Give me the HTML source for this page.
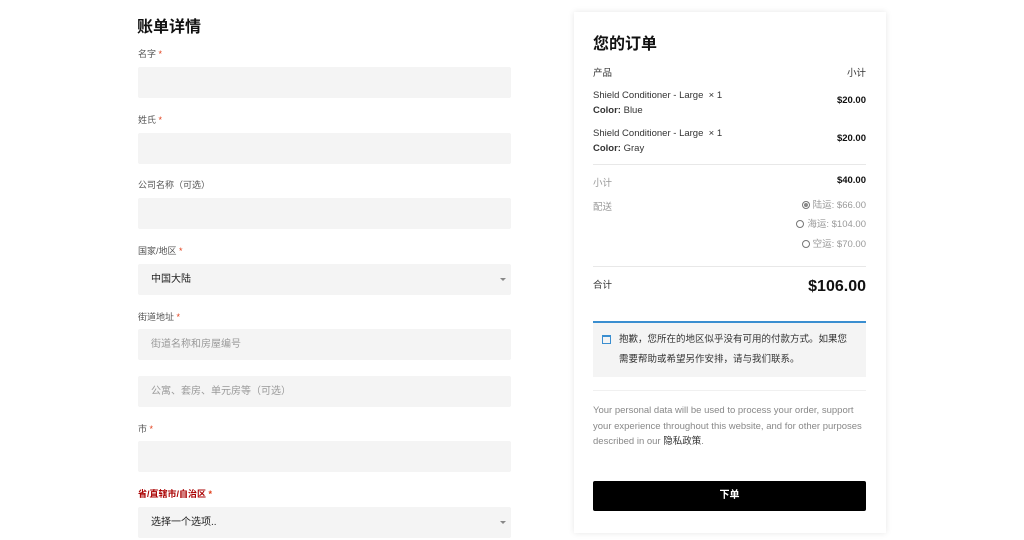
<!DOCTYPE html>
<html><head><meta charset="utf-8"><style>
*{margin:0;padding:0;box-sizing:border-box}
body{width:1024px;height:540px;overflow:hidden;background:#fff;font-family:"Liberation Sans","Noto Sans CJK SC",sans-serif;color:#222;position:relative}
.a{position:absolute}
h2{position:absolute;font-size:16px;font-weight:bold;color:#111}
.lb{position:absolute;left:138px;font-size:9px;color:#555}
.lb i{color:#e2401c;font-style:normal}
.in{position:absolute;left:138px;width:373px;height:31px;background:#f4f4f4;border-radius:2px;font-size:10px;padding-left:13px;line-height:31px;color:#999}
.sel{color:#222}
.sel:after{content:"";position:absolute;right:5px;top:14px;border:3px solid transparent;border-top:3px solid #888}
.card{position:absolute;left:574px;top:12px;width:312px;height:521px;background:#fff;box-shadow:0 0 6px rgba(0,0,0,.1)}
.t{position:absolute;font-size:9.5px;color:#333}
.hr{position:absolute;left:19px;width:273px;height:1px;background:#e8e8e8}
.rd{display:inline-block;width:8px;height:8px;border:1px solid #777;border-radius:50%;vertical-align:-1px;margin-right:3px;position:relative}
.rd.on:after{content:"";position:absolute;left:1px;top:1px;width:4px;height:4px;border-radius:50%;background:#888}
</style></head><body>
<h2 style="left:137px;top:13px">账单详情</h2>
<div class="lb" style="top:47px">名字 <i>*</i></div>
<div class="in" style="top:67px"></div>
<div class="lb" style="top:113px">姓氏 <i>*</i></div>
<div class="in" style="top:133px"></div>
<div class="lb" style="top:178px">公司名称（可选）</div>
<div class="in" style="top:198px"></div>
<div class="lb" style="top:244px">国家/地区 <i>*</i></div>
<div class="in sel" style="top:264px">中国大陆</div>
<div class="lb" style="top:310px">街道地址 <i>*</i></div>
<div class="in" style="top:329px">街道名称和房屋编号</div>
<div class="in" style="top:376px">公寓、套房、单元房等（可选）</div>
<div class="lb" style="top:422px">市 <i>*</i></div>
<div class="in" style="top:441px"></div>
<div class="lb" style="top:487px;color:#a00;font-weight:bold">省/直辖市/自治区 <i>*</i></div>
<div class="in sel" style="top:507px">选择一个选项..</div>

<div class="card">
<h2 style="left:19px;top:18px">您的订单</h2>
<div class="t" style="left:19px;top:53px">产品</div>
<div class="t" style="right:20px;top:53px">小计</div>
<div class="t" style="left:19px;top:76px;line-height:15px">Shield Conditioner - Large &nbsp;× 1<br><b>Color:</b> Blue</div>
<div class="t" style="right:20px;top:83px;font-weight:bold;color:#111">$20.00</div>
<div class="t" style="left:19px;top:114px;line-height:15px">Shield Conditioner - Large &nbsp;× 1<br><b>Color:</b> Gray</div>
<div class="t" style="right:20px;top:121px;font-weight:bold;color:#111">$20.00</div>
<div class="hr" style="top:152px"></div>
<div class="t" style="left:19px;top:163px;color:#999">小计</div>
<div class="t" style="right:20px;top:163px;font-weight:bold;color:#111">$40.00</div>
<div class="t" style="left:19px;top:187px;color:#999">配送</div>
<div class="t" style="right:20px;top:184px;color:#999;text-align:right;line-height:19.3px"><span class="rd on"></span>陆运: $66.00<br><span class="rd"></span>海运: $104.00<br><span class="rd"></span>空运: $70.00</div>
<div class="hr" style="top:254px"></div>
<div class="t" style="left:19px;top:265px">合计</div>
<div class="a" style="right:20px;top:266px;font-size:16px;font-weight:bold;color:#111">$106.00</div>
<div class="a" style="left:19px;top:309px;width:273px;height:56px;background:#f4f4f4;border-top:2px solid #3a8ed0"></div>
<div class="a" style="left:28px;top:323px;width:9px;height:9px;border:1px solid #3a8ed0;border-top-width:2px"></div>
<div class="t" style="left:45px;top:318px;line-height:20px;width:232px;color:#333">抱歉，您所在的地区似乎没有可用的付款方式。如果您需要帮助或希望另作安排，请与我们联系。</div>
<div class="hr" style="top:378px;background:#f0f0f0"></div>
<div class="t" style="left:19px;top:391px;width:273px;line-height:15.5px;color:#888">Your personal data will be used to process your order, support your experience throughout this website, and for other purposes described in our <span style="color:#333">隐私政策</span>.</div>
<div class="a" style="left:19px;top:469px;width:273px;height:30px;background:#000;border-radius:2px;color:#fff;font-size:10px;font-weight:bold;text-align:center;line-height:30px">下单</div>
</div>
</body></html>
